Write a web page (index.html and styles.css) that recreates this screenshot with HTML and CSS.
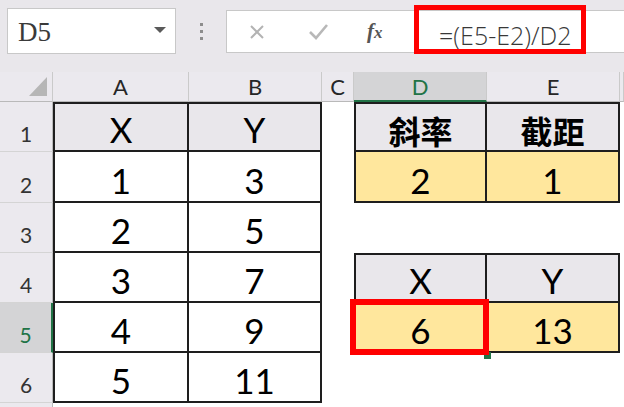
FILE: index.html
```html
<!DOCTYPE html>
<html lang="zh-Hant">
<head>
<meta charset="utf-8">
<title>Excel</title>
<link rel="stylesheet" href="styles.css">
</head>
<body>
<div class="topbar">
  <div class="namebox"><span class="nb-text">D5</span><span class="nb-arrow"></span></div>
  <div class="grip"><i></i><i></i><i></i></div>
  <div class="fbox">
    <svg class="ic-x" width="16" height="16" viewBox="0 0 16 16"><path d="M2 2 L14 14 M14 2 L2 14" stroke="#b3b3b3" stroke-width="2" fill="none"/></svg>
    <svg class="ic-ok" width="21" height="17" viewBox="0 0 21 17"><path d="M2 9 L8 15 L19 2" stroke="#b8b8b8" stroke-width="2.6" fill="none"/></svg>
    <span class="ic-fx">f<span class="fx-x">x</span></span>
    <span class="formula">=(E5-E2)/D2</span>
  </div>
  <div class="mark-formula"></div>
</div>
<div class="sheet">
  <div class="ch corner"><svg width="18" height="19" viewBox="0 0 18 19"><polygon points="18,0 18,19 0,19" fill="#b6b6b6"/></svg></div>
  <div class="ch">A</div>
  <div class="ch">B</div>
  <div class="ch">C</div>
  <div class="ch sel">D</div>
  <div class="ch">E</div>
  <div class="ch"></div>

  <div class="rh">1</div>
  <div class="c b bl bt hd">X</div>
  <div class="c b bt hd">Y</div>
  <div class="c"></div>
  <div class="c b bl bt hd zh">斜率</div>
  <div class="c b bt hd zh">截距</div>
  <div class="c"></div>

  <div class="rh">2</div>
  <div class="c b bl">1</div>
  <div class="c b">3</div>
  <div class="c"></div>
  <div class="c b bl y">2</div>
  <div class="c b y">1</div>
  <div class="c"></div>

  <div class="rh">3</div>
  <div class="c b bl">2</div>
  <div class="c b">5</div>
  <div class="c"></div>
  <div class="c"></div>
  <div class="c"></div>
  <div class="c"></div>

  <div class="rh">4</div>
  <div class="c b bl">3</div>
  <div class="c b">7</div>
  <div class="c"></div>
  <div class="c b bl bt hd">X</div>
  <div class="c b bt hd">Y</div>
  <div class="c"></div>

  <div class="rh sel">5</div>
  <div class="c b bl">4</div>
  <div class="c b">9</div>
  <div class="c"></div>
  <div class="c b bl y">6</div>
  <div class="c b y">13</div>
  <div class="c"></div>

  <div class="rh">6</div>
  <div class="c b bl">5</div>
  <div class="c b">11</div>
  <div class="c"></div>
  <div class="c"></div>
  <div class="c"></div>
  <div class="c"></div>

  <div class="rh"></div>
  <div class="c"></div>
  <div class="c"></div>
  <div class="c"></div>
  <div class="c"></div>
  <div class="c"></div>
  <div class="c"></div>

  <div class="handle"></div>
  <div class="mark-cell"></div>
</div>
</body>
</html>
```

FILE: styles.css
```css
html, body {
  margin: 0;
  padding: 0;
  width: 624px;
  height: 407px;
  overflow: hidden;
  background: #ffffff;
}

.topbar {
  position: relative;
  height: 72px;
  background: #e9e7eb;
  display: flex;
  align-items: flex-start;
}

.namebox {
  box-sizing: border-box;
  margin: 8px 0 0 7px;
  width: 169px;
  height: 46px;
  background: #fff;
  border: 1px solid #c8c8c8;
  display: flex;
  align-items: center;
  justify-content: space-between;
  padding: 0 9px 0 10px;
}

.nb-text {
  font-family: "Liberation Serif", serif;
  font-size: 27px;
  color: #3a3a3a;
  padding-top: 3px;
}

.nb-arrow {
  width: 0;
  height: 0;
  border-left: 6px solid transparent;
  border-right: 6px solid transparent;
  border-top: 6px solid #5a5a5a;
  margin-bottom: 3px;
}

.grip {
  width: 50px;
  display: flex;
  flex-direction: column;
  align-items: center;
  gap: 4px;
  padding-top: 23px;
}

.grip i {
  display: block;
  width: 3px;
  height: 3px;
  background: #8d8d8d;
}

.fbox {
  box-sizing: border-box;
  flex: 1;
  margin-top: 10px;
  height: 43px;
  background: #fff;
  border: 1px solid #c8c8c8;
  border-right: none;
  display: flex;
  align-items: center;
}

.ic-x {
  margin-left: 22px;
}

.ic-ok {
  margin-left: 43px;
}

.ic-fx {
  margin-left: 38px;
  font-family: "Liberation Serif", serif;
  font-style: italic;
  font-weight: bold;
  font-size: 21px;
  color: #555;
  width: 22px;
}

.fx-x {
  font-size: 17px;
}

.formula {
  margin-left: 50px;
  font-family: "Open Sans", sans-serif;
  font-weight: 300;
  font-size: 25px;
  color: #383838;
  padding-top: 6px;
  white-space: nowrap;
}

.mark-formula {
  position: absolute;
  left: 414px;
  top: 5px;
  width: 162px;
  height: 39px;
  border: 5px solid #ff0000;
}

.sheet {
  position: relative;
  display: grid;
  grid-template-columns: 53px 136px 133px 32px 133px 133px 1fr;
  grid-template-rows: 30px 50px 51px 50px 50px 50px 50px 1fr;
  height: 335px;
  font-family: Lato, "Noto Sans", sans-serif;
}

.sheet > div {
  box-sizing: border-box;
}

.ch {
  background: #ebe9ee;
  border-right: 1px solid #cacaca;
  border-bottom: 1px solid #b9b9b9;
  display: flex;
  align-items: center;
  justify-content: center;
  font-size: 22px;
  color: #262626;
}

.ch.sel {
  background: #d4d4d6;
  border-bottom: 2px solid #217346;
  color: #217346;
}

.corner {
  justify-content: flex-end;
  align-items: flex-end;
  padding: 0 5px 5px 0;
}

.corner svg {
  display: block;
}

.rh {
  background: #ebe9ee;
  border-right: 1px solid #b9b9b9;
  border-bottom: 1px solid #d4d4d4;
  display: flex;
  align-items: flex-end;
  justify-content: center;
  font-size: 21px;
  line-height: 1;
  color: #333;
  padding-bottom: 7px;
}

.rh.sel {
  background: #d4d4d6;
  border-right: 2px solid #217346;
  color: #217346;
}

.c {
  background: #fff;
  display: flex;
  align-items: flex-end;
  justify-content: center;
  font-size: 35px;
  line-height: 1;
  color: #000;
  padding-bottom: 3px;
}

.b {
  border-right: 2px solid #1e1e1e;
  border-bottom: 2px solid #1e1e1e;
}

.bl {
  border-left: 2px solid #1e1e1e;
}

.bt {
  border-top: 2px solid #1e1e1e;
}

.hd {
  background: #e9e7eb;
}

.y {
  background: #ffe79d;
}

.zh {
  font-family: "Noto Sans CJK TC", "Noto Sans CJK SC", sans-serif;
  font-weight: 700;
  font-size: 32px;
  padding-bottom: 4px;
}

.handle {
  position: absolute;
  left: 484px;
  top: 280px;
  width: 7px;
  height: 7px;
  background: #217346;
  z-index: 1;
}

.mark-cell {
  position: absolute;
  left: 350px;
  top: 227px;
  width: 139px;
  height: 56px;
  border: 6px solid #ff0000;
  z-index: 2;
}
```
